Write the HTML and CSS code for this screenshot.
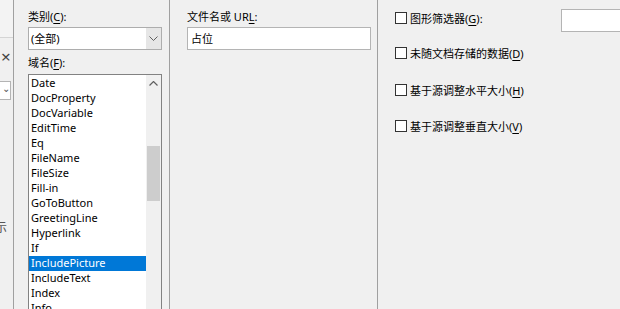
FILE: index.html
```html
<!DOCTYPE html>
<html lang="zh-CN">
  <head>
    <meta charset="UTF-8" />
    <meta name="viewport" content="width=device-width, initial-scale=1.0" />
    <title>域</title>
    <link rel="stylesheet" href="styles.css">
  </head>
  <body>
    <div class="dialog">
      <div class="side">
        <div class="side-top"></div>
        <div class="side-close">×</div>
        <div class="side-select"><span class="side-chevron">⌄</span></div>
        <div class="side-text">示</div>
      </div>

      <div class="fields">
        <div class="label">类别(<u>C</u>):</div>
        <div class="combo">
          <span class="combo-value">(全部)</span>
          <span class="combo-button">
            <svg width="9" height="5" viewBox="0 0 9 5"><path d="M0.5 0.5 L4.5 4.5 L8.5 0.5" fill="none" stroke="#606060" stroke-width="1" /></svg>
          </span>
        </div>
        <div class="label label-list">域名(<u>F</u>):</div>
        <div class="listbox">
          <ul class="items">
            <li>Date</li>
            <li>DocProperty</li>
            <li>DocVariable</li>
            <li>EditTime</li>
            <li>Eq</li>
            <li>FileName</li>
            <li>FileSize</li>
            <li>Fill-in</li>
            <li>GoToButton</li>
            <li>GreetingLine</li>
            <li>Hyperlink</li>
            <li>If</li>
            <li class="selected">IncludePicture</li>
            <li>IncludeText</li>
            <li>Index</li>
            <li>Info</li>
          </ul>
          <div class="scrollbar">
            <div class="scroll-arrow">
              <svg width="9" height="5" viewBox="0 0 9 5"><path d="M0.5 4.5 L4.5 0.5 L8.5 4.5" fill="none" stroke="#606060" stroke-width="1.2" /></svg>
            </div>
            <div class="scroll-thumb"></div>
          </div>
        </div>
      </div>

      <div class="properties">
        <div class="label">文件名或 UR<u>L</u>:</div>
        <div class="textbox">占位</div>
      </div>

      <div class="options">
        <div class="option option-first">
          <label class="check"><span class="box"></span><span>图形筛选器(<u>G</u>):</span></label>
          <div class="filter-input"></div>
        </div>
        <div class="option">
          <label class="check"><span class="box"></span><span>未随文档存储的数据(<u>D</u>)</span></label>
        </div>
        <div class="option option-tall">
          <label class="check"><span class="box"></span><span>基于源调整水平大小(<u>H</u>)</span></label>
        </div>
        <div class="option">
          <label class="check"><span class="box"></span><span>基于源调整垂直大小(<u>V</u>)</span></label>
        </div>
      </div>
    </div>
  </body>
</html>
```

FILE: styles.css
```css
body {
  margin: 0;
  background: #f0f0f0;
  font-family: "Noto Sans", "Noto Sans CJK SC", sans-serif;
  font-size: 11px;
  color: #000;
  height: 309px;
  overflow: hidden;
}
.dialog {
  display: flex;
  height: 309px;
}
u {
  text-underline-offset: 2px;
}

/* left strip of the neighbouring pane */
.side {
  width: 13px;
  flex: 0 0 13px;
  border-right: 1px solid #a0a0a0;
  overflow: hidden;
}
.side-top {
  height: 37px;
  border-bottom: 1px solid #d4d4d4;
  background: #f3f3f3;
}
.side-close {
  margin-top: 10px;
  padding-left: 1px;
  font-size: 17px;
  line-height: 18px;
  color: #444;
}
.side-select {
  margin-top: 15px;
  height: 19px;
  width: 11px;
  background: #fff;
  border: 1px solid #b4b4b4;
  border-left: none;
  box-sizing: border-box;
}
.side-chevron {
  display: block;
  padding-left: 2px;
  font-size: 10px;
  line-height: 12px;
  color: #555;
}
.side-text {
  margin-top: 120px;
  margin-left: -5px;
  font-size: 12px;
  line-height: 16px;
  color: #555;
}

/* field list column */
.fields {
  width: 156px;
  flex: 0 0 156px;
  border-right: 1px solid #a0a0a0;
  padding: 9px 0 0 14px;
  box-sizing: border-box;
}
.label {
  line-height: 16px;
  white-space: nowrap;
}
.combo {
  margin-top: 2px;
  width: 134px;
  height: 23px;
  background: #fff;
  border: 1px solid #adadad;
  box-sizing: border-box;
  display: flex;
  align-items: stretch;
}
.combo-value {
  flex: 1;
  padding-left: 2px;
  line-height: 21px;
}
.combo-button {
  width: 15px;
  background: #e6e6e6;
  display: flex;
  align-items: center;
  justify-content: center;
}
.label-list {
  margin-top: 5px;
}
.listbox {
  margin-top: 3px;
  width: 134px;
  height: 260px;
  background: #fff;
  border: 1px solid #828282;
  box-sizing: border-box;
  display: flex;
}
.items {
  list-style: none;
  margin: 0;
  padding: 1px 0 0;
  flex: 1;
}
.items li {
  height: 15px;
  line-height: 14px;
  padding-left: 2px;
  white-space: nowrap;
}
.items li.selected {
  background: #0078d7;
  color: #fff;
}
.scrollbar {
  width: 15px;
  background: #f0f0f0;
}
.scroll-arrow {
  height: 17px;
  display: flex;
  align-items: center;
  justify-content: center;
}
.scroll-thumb {
  margin: 54px 1px 0;
  height: 55px;
  background: #cdcdcd;
}

/* properties column */
.properties {
  width: 208px;
  flex: 0 0 208px;
  border-right: 1px solid #a0a0a0;
  padding: 9px 0 0 17px;
  box-sizing: border-box;
}
.textbox {
  margin-top: 2px;
  width: 184px;
  height: 23px;
  background: #fff;
  border: 1px solid #b4b4b4;
  box-sizing: border-box;
  padding-left: 3px;
  line-height: 21px;
}

/* options column */
.options {
  flex: 1;
  padding-left: 17px;
  overflow: hidden;
}
.option {
  height: 36px;
  display: flex;
  align-items: center;
}
.option-first {
  height: 35px;
  display: grid;
  grid-template-columns: 166px 80px;
  align-items: center;
}
.option-tall {
  height: 37px;
}
.check {
  display: flex;
  align-items: center;
  gap: 3px;
  white-space: nowrap;
}
.box {
  width: 12px;
  height: 12px;
  border: 1px solid #333;
  background: #fff;
  box-sizing: border-box;
}
.filter-input {
  height: 23px;
  margin-top: 6px;
  background: #fff;
  border: 1px solid #b4b4b4;
  box-sizing: border-box;
}
```
